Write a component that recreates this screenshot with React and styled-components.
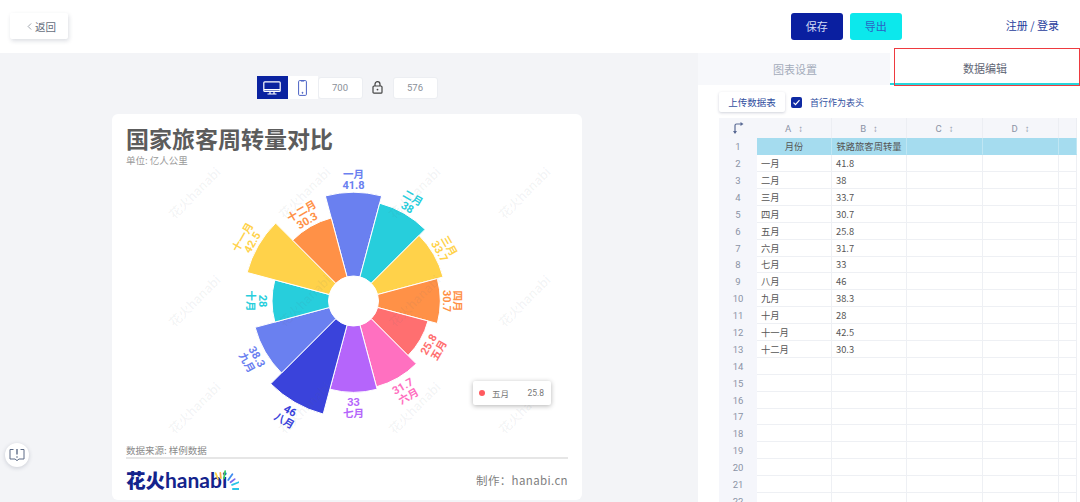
import styled, { createGlobalStyle } from "styled-components";
import { ChevronLeft } from "lucide-react";

const FONT = `"Noto Sans CJK SC", "Noto Sans", sans-serif`;

const GlobalStyle = createGlobalStyle`
  html, body {
    margin: 0;
    padding: 0;
    background: #fff;
    font-family: ${FONT};
  }
`;

const data = [
  { name: "一月", value: 41.8, color: "#6a80f0" },
  { name: "二月", value: 38, color: "#27cedc" },
  { name: "三月", value: 33.7, color: "#ffd24a" },
  { name: "四月", value: 30.7, color: "#ff9147" },
  { name: "五月", value: 25.8, color: "#ff6f70" },
  { name: "六月", value: 31.7, color: "#ff70c0" },
  { name: "七月", value: 33, color: "#b565fb" },
  { name: "八月", value: 46, color: "#3a43db" },
  { name: "九月", value: 38.3, color: "#6a80f0" },
  { name: "十月", value: 28, color: "#27cedc" },
  { name: "十一月", value: 42.5, color: "#ffd24a" },
  { name: "十二月", value: 30.3, color: "#ff9147" },
];

const CX = 227.5;
const CY = 134;
const INNER = 25;

const polar = (r, deg) => {
  const a = (deg * Math.PI) / 180;
  return [CX + r * Math.sin(a), CY - r * Math.cos(a)];
};

const slicePath = (r, start, end) => {
  const [x1, y1] = polar(INNER, start);
  const [x2, y2] = polar(r, start);
  const [x3, y3] = polar(r, end);
  const [x4, y4] = polar(INNER, end);
  return `M${x1} ${y1}L${x2} ${y2}A${r} ${r} 0 0 1 ${x3} ${y3}L${x4} ${y4}A${INNER} ${INNER} 0 0 0 ${x1} ${y1}Z`;
};

const Page = styled.div`
  width: 1080px;
  height: 502px;
  overflow: hidden;
  position: relative;
  display: flex;
  flex-direction: column;
`;

const Header = styled.header`
  height: 53px;
  flex: none;
  display: flex;
  align-items: center;
  padding: 0 21px 0 10px;
  box-sizing: border-box;
  background: #fff;
`;

const BackButton = styled.button`
  width: 58px;
  height: 26px;
  margin-top: -1px;
  border: 0;
  padding: 0 0 0 14px;
  display: flex;
  align-items: center;
  background: #fff;
  box-shadow: 1px 2px 4px rgba(40, 50, 80, 0.16);
  border-radius: 2px;
  font: 10.5px ${FONT};
  color: #666e7c;
`;

const HeaderActions = styled.div`
  margin-left: auto;
  display: flex;
  align-items: center;
  gap: 7px;
`;

const ActionButton = styled.button`
  width: 52px;
  height: 27px;
  margin-top: -1px;
  border: 0;
  border-radius: 3px;
  background: ${(p) => (p.$primary ? "#0a1fa0" : "#0ce8ec")};
  color: ${(p) => (p.$primary ? "#d4dcf5" : "#2c62c4")};
  font: 11px ${FONT};
`;

const LoginLink = styled.a`
  margin-left: 97px;
  margin-top: -3px;
  font-size: 11px;
  color: #1f3c9c;
  white-space: nowrap;
`;

const Main = styled.main`
  flex: 1;
  min-height: 0;
  display: flex;
`;

const Stage = styled.section`
  width: 698px;
  flex: none;
  box-sizing: border-box;
  padding: 23px 4px 0 0;
  background: #f3f4f7;
  display: flex;
  flex-direction: column;
  align-items: center;
`;

const SizeBar = styled.div`
  height: 23px;
  display: flex;
  align-items: center;
  margin: 0 0 15px 0;
`;

const DeviceButton = styled.div`
  width: ${(p) => (p.$active ? "31px" : "30px")};
  height: 23px;
  display: flex;
  align-items: center;
  justify-content: center;
  background: ${(p) => (p.$active ? "#0a22a0" : "#fff")};
`;

const SizeInput = styled.div`
  width: 45px;
  height: 22px;
  box-sizing: border-box;
  display: flex;
  align-items: center;
  justify-content: center;
  background: #fff;
  border: 1px solid #eceef2;
  border-radius: 3px;
  font: 9.5px Roboto, sans-serif;
  color: #8a8f98;
`;

const LockSlot = styled.div`
  width: 30px;
  display: flex;
  justify-content: center;
`;

const Card = styled.article`
  position: relative;
  width: 470px;
  height: 386px;
  box-sizing: border-box;
  padding: 9px 14px 0;
  background: #fff;
  border-radius: 6px;
  display: flex;
  flex-direction: column;
`;

const Title = styled.h1`
  margin: 0 0 2px;
  font-size: 23px;
  line-height: 30px;
  font-weight: 700;
  color: #5c5c5c;
  white-space: nowrap;
`;

const Unit = styled.div`
  font-size: 9.5px;
  line-height: 11px;
  margin-bottom: 1px;
  color: #9a9a9a;
`;

const ChartSvg = styled.svg`
  display: block;
  flex: none;
  width: 442px;
  height: 277px;
  overflow: visible;
`;

const Source = styled.div`
  font-size: 9.5px;
  line-height: 13px;
  color: #8a8a8a;
  border-bottom: 2px solid #e6e6e6;
`;

const CardFooter = styled.footer`
  flex: 1;
  display: flex;
  align-items: center;
  justify-content: space-between;
`;

const Logo = styled.div`
  display: flex;
  align-items: flex-end;
  color: #14238c;
  line-height: 1;
`;

const LogoCn = styled.span`
  font-size: 19.5px;
  font-weight: 900;
  line-height: 25px;
`;

const LogoEn = styled.span`
  font-family: Lato, sans-serif;
  font-size: 21px;
  font-weight: 700;
  line-height: 25px;
`;

const LogoRays = styled.svg`
  width: 26px;
  height: 26px;
  margin: 0 0 -4px -14px;
`;

const Credit = styled.div`
  font-size: 11.5px;
  color: #7f7f7f;
  letter-spacing: 0.36px;
`;

const Watermarks = styled.div`
  position: absolute;
  inset: 0;
  padding: 25px 0 0 27px;
  pointer-events: none;
  display: grid;
  grid-template-columns: repeat(4, 110px);
  grid-auto-rows: 107.5px;
`;

const Watermark = styled.span`
  justify-self: center;
  align-self: center;
  transform: rotate(-45deg);
  font-size: 12.5px;
  font-weight: 500;
  color: rgba(90, 100, 120, 0.08);
  white-space: nowrap;
`;

const Tooltip = styled.div`
  position: absolute;
  left: 361px;
  top: 267px;
  width: 78px;
  height: 24px;
  box-sizing: border-box;
  padding: 0 7px 0 6px;
  background: #fff;
  box-shadow: 0 1px 5px rgba(0, 0, 0, 0.3);
  border-radius: 2px;
  display: flex;
  align-items: center;
  font-size: 8.5px;
  color: #777;
`;

const TooltipDot = styled.i`
  width: 6px;
  height: 6px;
  border-radius: 50%;
  background: #ff5a5f;
  margin-right: 7px;
`;

const TooltipValue = styled.span`
  margin-left: auto;
  font-family: Roboto, sans-serif;
`;

const Panel = styled.aside`
  flex: 1;
  min-width: 0;
  background: #fff;
  display: flex;
  flex-direction: column;
`;

const Tabs = styled.div`
  height: 32px;
  flex: none;
  display: grid;
  grid-template-columns: 192px 1fr;
  background: #f7f8fb;
`;

const Tab = styled.div`
  display: flex;
  align-items: center;
  justify-content: center;
  padding-left: ${(p) => (p.$active ? "0" : "2px")};
  font-size: 11px;
  color: ${(p) => (p.$active ? "#5f6675" : "#a3abba")};
  background: ${(p) => (p.$active ? "#fff" : "transparent")};
  border-bottom: ${(p) => (p.$active ? "2px solid #27d5dc" : "0")};
`;

const RedBox = styled.div`
  position: absolute;
  left: 894px;
  top: 48px;
  width: 186px;
  height: 38px;
  box-sizing: border-box;
  border: 1.5px solid #ee3a3f;
  pointer-events: none;
`;

const UploadRow = styled.div`
  height: 33px;
  flex: none;
  display: flex;
  align-items: center;
  padding: 1px 0 0 21px;
  box-sizing: border-box;
`;

const UploadButton = styled.button`
  width: 66px;
  height: 20px;
  padding: 0;
  border: 0;
  background: #fff;
  box-shadow: 0 1px 3px rgba(40, 50, 90, 0.22);
  border-radius: 2px;
  font: 9.5px ${FONT};
  color: #31509f;
`;

const Check = styled.span`
  width: 11px;
  height: 11px;
  margin-left: 6px;
  background: #0f2aa3;
  border-radius: 2px;
  display: flex;
  align-items: center;
  justify-content: center;
`;

const CheckLabel = styled.span`
  margin-left: 8px;
  font-size: 9px;
  color: #31509f;
`;

const Sheet = styled.div`
  margin-left: 21px;
  flex: 1;
  min-height: 0;
  overflow: hidden;
  display: grid;
  grid-template-columns: 38px 75px 75px 76px 76px 18px;
  grid-template-rows: 20.3px repeat(22, 16.9px);
  align-content: start;
  width: 358px;
  background: #fff;
`;

const Corner = styled.div`
  background: #f5f6fa;
  display: flex;
  align-items: center;
  justify-content: center;
`;

const ColHead = styled.div`
  background: #f5f6fa;
  border-right: 1px solid #eceef3;
  box-sizing: border-box;
  display: flex;
  align-items: center;
  justify-content: center;
  gap: 7px;
  font: 9.5px Roboto, sans-serif;
  color: #8b93a5;
`;

const RowNum = styled.div`
  background: #f5f6fb;
  box-sizing: border-box;
  display: flex;
  align-items: center;
  justify-content: center;
  font: 9.5px Roboto, sans-serif;
  color: #8b93a5;
`;

const Cell = styled.div`
  box-sizing: border-box;
  padding: 0 4px;
  display: flex;
  align-items: center;
  justify-content: ${(p) => (p.$head ? "center" : "flex-start")};
  white-space: nowrap;
  overflow: hidden;
  font-size: 9.3px;
  color: #555;
  background: ${(p) => (p.$head ? "#a5dcef" : "#fff")};
  border-right: 1px solid ${(p) => (p.$head ? "#bfe6f3" : "#eef0f4")};
  border-bottom: 1px solid ${(p) => (p.$head ? "#a5dcef" : "#eef0f4")};
`;

const Feedback = styled.button`
  position: absolute;
  left: 5px;
  top: 443px;
  width: 24px;
  height: 24px;
  padding: 0;
  border: 0;
  border-radius: 50%;
  background: #fff;
  box-shadow: 0 1px 4px rgba(40, 50, 80, 0.2);
  display: flex;
  align-items: center;
  justify-content: center;
`;

const SliceLabel = ({ d, i }) => {
  const angle = i * 30;
  const r = 26 + 1.98 * d.value;
  const flip = angle > 90 && angle <= 270;
  const [x, y] = polar(r + (flip ? 15.5 : 12.5), angle);
  const rot = flip ? angle - 180 : angle > 270 ? angle - 360 : angle;
  const nameY = flip ? 9.5 : -1.5;
  const valueY = flip ? -2 : 9.5;
  return (
    <g transform={`translate(${x} ${y}) rotate(${rot})`} fill={d.color} textAnchor="middle">
      <text y={nameY} fontSize="10.5" fontWeight="700" fontFamily={FONT}>{d.name}</text>
      <text y={valueY} fontSize="11" fontWeight="700" fontFamily="Roboto, sans-serif">{d.value}</text>
    </g>
  );
};

// angle, colour and length of each spark above the logo's i
const rays = [
  [-22, "#ffd24a", 8],
  [-6, "#ffb04a", 7],
  [10, "#3ccf6a", 9],
  [35, "#3f8cf0", 9],
  [52, "#7a6cf0", 7],
  [68, "#29c5e8", 9],
  [90, "#29c5e8", 8],
];

const blankRows = Array.from({ length: 9 }, (_, i) => i + 14);

const RowCells = ({ num, a, b }) => (
  <>
    <RowNum>{num}</RowNum>
    <Cell>{a}</Cell>
    <Cell>{b}</Cell>
    <Cell />
    <Cell />
    <Cell />
  </>
);

const App = () => {
  return (
    <Page>
      <GlobalStyle />
      <Header>
        <BackButton>
          <ChevronLeft size={11} strokeWidth={1.3} />
          返回
        </BackButton>
        <HeaderActions>
          <ActionButton $primary>保存</ActionButton>
          <ActionButton>导出</ActionButton>
          <LoginLink>注册 / 登录</LoginLink>
        </HeaderActions>
      </Header>

      <Main>
        <Stage>
          <SizeBar>
            <DeviceButton $active>
              <svg width="18" height="14" viewBox="0 0 18 14" fill="none" stroke="#fff" strokeWidth="1.2">
                <rect x="0.8" y="0.8" width="16.4" height="9.6" rx="1" />
                <path d="M1 8.6h16M7 10.5v2M11 10.5v2M4.5 13h9" />
              </svg>
            </DeviceButton>
            <DeviceButton>
              <svg width="9" height="16" viewBox="0 0 9 16" fill="none" stroke="#4a62c4" strokeWidth="1">
                <rect x="0.6" y="0.6" width="7.8" height="14.8" rx="1" />
                <path d="M3 1h3" />
                <circle cx="4.5" cy="12.8" r="0.5" fill="#4a62c4" />
              </svg>
            </DeviceButton>
            <SizeInput>700</SizeInput>
            <LockSlot>
              <svg width="11" height="13" viewBox="0 0 11 13" fill="none" stroke="#444" strokeWidth="1.2">
                <rect x="1" y="5" width="9" height="7.2" rx="1" />
                <path d="M3 5V3.2a2.5 2.5 0 0 1 5 0V5" />
                <circle cx="5.5" cy="8.6" r="0.9" fill="#444" stroke="none" />
              </svg>
            </LockSlot>
            <SizeInput>576</SizeInput>
          </SizeBar>

          <Card>
            <Title>国家旅客周转量对比</Title>
            <Unit>单位: 亿人公里</Unit>
            <ChartSvg viewBox="0 0 442 277">
              {data.map((d, i) => (
                <path
                  key={d.name}
                  d={slicePath(26 + 1.98 * d.value, i * 30 - 15, i * 30 + 15)}
                  fill={d.color}
                  stroke="#fff"
                  strokeWidth="1"
                />
              ))}
              {data.map((d, i) => (
                <SliceLabel key={d.name} d={d} i={i} />
              ))}
            </ChartSvg>
            <Source>数据来源: 样例数据</Source>
            <CardFooter>
              <Logo>
                <LogoCn>花火</LogoCn>
                <LogoEn>hanabi</LogoEn>
                <LogoRays viewBox="0 0 26 26">
                  {rays.map(([deg, color, len]) => (
                    <rect
                      key={deg}
                      x="8.1"
                      y={9 - len}
                      width="1.8"
                      height={len}
                      rx="0.9"
                      fill={color}
                      transform={`rotate(${deg} 9 19)`}
                    />
                  ))}
                </LogoRays>
              </Logo>
              <Credit>制作：hanabi.cn</Credit>
            </CardFooter>
            <Watermarks>
              {Array.from({ length: 12 }, (_, i) => (
                <Watermark key={i}>花火hanabi</Watermark>
              ))}
            </Watermarks>
            <Tooltip>
              <TooltipDot />
              五月
              <TooltipValue>25.8</TooltipValue>
            </Tooltip>
          </Card>
        </Stage>

        <Panel>
          <Tabs>
            <Tab>图表设置</Tab>
            <Tab $active>数据编辑</Tab>
          </Tabs>
          <UploadRow>
            <UploadButton>上传数据表</UploadButton>
            <Check>
              <svg width="9" height="9" viewBox="0 0 9 9" fill="none" stroke="#fff" strokeWidth="1.2">
                <path d="M1.5 4.6l2 2 4-4.4" />
              </svg>
            </Check>
            <CheckLabel>首行作为表头</CheckLabel>
          </UploadRow>
          <Sheet>
            <Corner>
              <svg width="14" height="14" viewBox="0 0 14 14" fill="none" stroke="#5a6a94" strokeWidth="1.2">
                <path d="M4 12V4.5Q4 3 5.5 3H10" />
                <path d="M9.5 1l3 2-3 2z" fill="#5a6a94" stroke="none" />
                <path d="M2 10l2 3 2-3z" fill="#5a6a94" stroke="none" />
              </svg>
            </Corner>
            {["A", "B", "C", "D"].map((c) => (
              <ColHead key={c}>
                {c}
                <span>↕</span>
              </ColHead>
            ))}
            <ColHead />
            <RowNum>1</RowNum>
            <Cell $head>月份</Cell>
            <Cell $head>铁路旅客周转量</Cell>
            <Cell $head />
            <Cell $head />
            <Cell $head />
            {data.map((d, i) => (
              <RowCells key={d.name} num={i + 2} a={d.name} b={d.value} />
            ))}
            {blankRows.map((n) => (
              <RowCells key={n} num={n} />
            ))}
          </Sheet>
        </Panel>
      </Main>

      <RedBox />
      <Feedback>
        <svg width="16" height="14" viewBox="0 0 16 14" fill="none" stroke="#5c6b86" strokeWidth="1">
          <path d="M4.5 1.5H1v9.5h5l2 1.6 2-1.6h5V1.5h-3.5" />
          <path d="M8 1v5.5" strokeWidth="1.4" />
          <circle cx="8" cy="9" r="0.8" fill="#5c6b86" stroke="none" />
        </svg>
      </Feedback>
    </Page>
  );
};

export default App;
